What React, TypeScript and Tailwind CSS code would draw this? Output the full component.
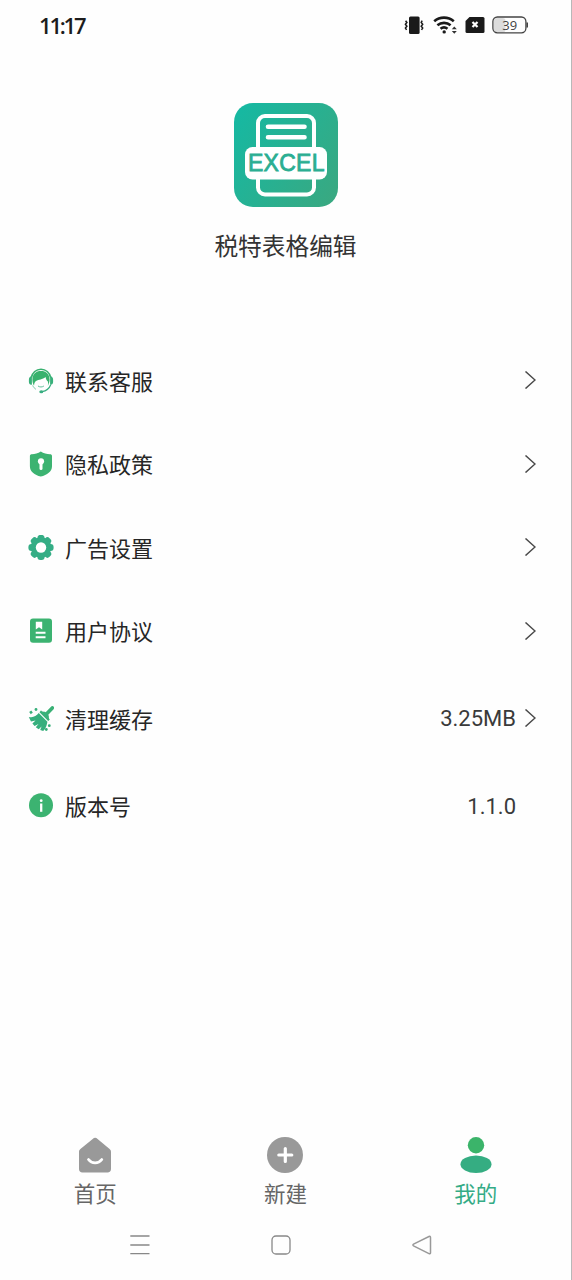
import type { ReactNode } from "react";

type MenuItemProps = {
  icon: ReactNode;
  label: string;
  value?: string;
  arrow?: boolean;
  className?: string;
};

type TabProps = {
  icon: ReactNode;
  label: string;
  active?: boolean;
};

function StatusBar() {
  return (
    <header className="flex h-[50px] items-center justify-between pl-[39px] pr-[43px]">
      <span className="font-['Open_Sans',sans-serif] text-[22px] font-semibold leading-none tracking-[-2.2px] text-[#1c1c1c]">11:17</span>
      <svg width="124" height="20" viewBox="0 0 124 20" fill="none" className="mt-px">
        <rect x="5" y="0.5" width="10.6" height="17.5" rx="1.5" fill="#1a1a1a" />
        <path d="M1.6 4.7l1.3 1.8-1.5 1.8 1.5 2-1.5 1.8 1.2 1.8M18.2 4.7l-1 1.8 1.5 1.8-1.5 2 1.5 1.8-1.2 1.8" stroke="#1a1a1a" strokeWidth="1.5" />
        <path d="M30.2 5.3a15 15 0 0 1 19.6 0M33.4 9.3a10.3 10.3 0 0 1 13.2 0M36.5 12.7a5.6 5.6 0 0 1 7 0" stroke="#1a1a1a" strokeWidth="2.6" />
        <circle cx="40.2" cy="15.9" r="1.7" fill="#1a1a1a" />
        <path d="M47.8 13.3l2.5-2.9 2.5 2.9zM47.8 14.9l2.5 2.9 2.5-2.9z" fill="#333" />
        <path d="M65.5 1H79a1.5 1.5 0 0 1 1.5 1.5v13A1.5 1.5 0 0 1 79 17H63a1.5 1.5 0 0 1-1.5-1.5V5z" fill="#1a1a1a" />
        <path d="M68.5 6l5 5M73.5 6l-5 5" stroke="#fff" strokeWidth="2.2" />
        <rect x="90" y="2" width="11.5" height="14.5" rx="3" fill="#dcdcdc" />
        <rect x="88.9" y="1" width="33" height="15.8" rx="4.5" stroke="#444" strokeWidth="1.3" />
        <path d="M123.2 6.5v5" stroke="#444" strokeWidth="1.6" />
        <text x="105.7" y="13.7" textAnchor="middle" fontSize="13" fill="#444" className="font-['Open_Sans',sans-serif]">39</text>
      </svg>
    </header>
  );
}

function AppLogo() {
  return (
    <svg width="104" height="104" viewBox="0 0 104 104" fill="none">
      <defs>
        <linearGradient id="logo" x1="0" y1="20" x2="104" y2="84" gradientUnits="userSpaceOnUse">
          <stop stopColor="#17b8a1" />
          <stop offset="1" stopColor="#38a982" />
        </linearGradient>
      </defs>
      <rect width="104" height="104" rx="19" fill="url(#logo)" />
      <rect x="24" y="13" width="56" height="78.5" rx="7" stroke="#fff" strokeWidth="4" />
      <path d="M34 23.7h36.5M34 34.3h36.5" stroke="#fff" strokeWidth="4.6" strokeLinecap="round" />
      <rect x="11" y="44" width="82" height="32.4" rx="7.5" fill="#fff" />
      <text x="14" y="68.4" textLength="76.5" fontSize="23" fill="#2bae92" stroke="#2bae92" strokeWidth="0.8" className="font-['Liberation_Sans',sans-serif]">EXCEL</text>
    </svg>
  );
}

function SupportIcon() {
  return (
    <svg width="26" height="26" viewBox="0 0 26 26" fill="none">
      <path d="M3.3 9.5C4.3 4.6 8.2 1.2 13 1.2s8.700 3.400 9.700 8.300" stroke="#38b06f" strokeWidth="1.6" />
      <path d="M3.900 8.200v8.600H3.200C1.800 16.600.9 15.600.9 14v-2.600c0-1.800 1.100-3 3-3.200zM22.100 8.200v8.600h.7c1.400-.2 2.300-1.200 2.300-2.800v-2.600c0-1.800-1.100-3-3-3.200z" fill="#38b07a" />
      <path d="M13 2.800c-5.100 0-8.600 3.500-8.600 8.700 0 2.200.5 4.400 1.600 6.200.2-3.200 1.500-5.100 4.200-5.700 3.300-.6 5.800-1.400 7.400-3 .3 2.200 1.100 3.600 2.300 4.600.4 1.300.3 2.700-.1 4.100 1.100-1.800 1.800-4 1.800-6.200 0-5.200-3.500-8.700-8.600-8.700z" fill="#38b26d" />
      <path d="M22.700 16.800c-1.300 3.600-4.600 6.200-8.700 6.900" stroke="#38ae80" strokeWidth="1.2" />
      <path d="M4.500 17.500c.9 1.700 2.100 3 3.500 3.900" stroke="#38ae80" strokeWidth="0.6" />
      <path d="M10.300 18.200c1.600 1.100 3.700 1.100 5.300 0" stroke="#38ae80" strokeWidth="0.8" strokeLinecap="round" />
      <ellipse cx="13.300" cy="23.700" rx="2" ry="1.500" fill="#38ae80" />
    </svg>
  );
}

function ShieldIcon() {
  return (
    <svg width="26" height="26" viewBox="0 0 26 26">
      <path d="M12.8.6c2.800 1.900 6 2.700 9.200 2.700 1.200 0 2 .5 2 1.700v10.200c0 5.400-4.900 8.600-11.200 10.400C6.500 23.800 1.900 20.600 1.900 15.200V5c0-1.200.8-1.700 2-1.700 3 0 6.100-.8 8.900-2.700z" fill="#3cb371" />
      <circle cx="13" cy="10.300" r="3.100" fill="#fff" />
      <path d="M13 11v6.500" stroke="#fff" strokeWidth="3" strokeLinecap="round" />
    </svg>
  );
}

function GearIcon() {
  return (
    <svg width="26" height="26" viewBox="0 0 26 26" fill="none">
      <circle cx="13" cy="12.500" r="10.300" fill="#34ad85" />
      {/* one tooth per 45deg */}
      <g stroke="#34ad85" strokeWidth="6" strokeLinejoin="round" strokeLinecap="round">
        <path d="M12.400 2.900h1.200M12.400 22.100h1.200M3.400 11.900v1.200M22.600 11.900v1.200M5.800 6.100l.8-.8M19.400 19.700l.8-.8M20.200 6.100l-.8-.8M6.600 19.700l-.8-.8" />
      </g>
      <circle cx="13" cy="12.500" r="5.200" fill="#fff" />
    </svg>
  );
}

function AgreementIcon() {
  return (
    <svg width="26" height="26" viewBox="0 0 26 26" fill="none">
      <rect x="2" y="0.5" width="22" height="24.2" rx="3" fill="#3cb371" />
      <path d="M7.8 3.8h6.400v7.800L11 9.300l-3.200 2.300z" fill="#fff" />
      <path d="M7.700 14.700h9.800M7.700 19.200h9.800" stroke="#fff" strokeWidth="2" />
    </svg>
  );
}

function BroomIcon() {
  return (
    <svg width="26" height="26" viewBox="0 0 26 26" fill="none">
      <path d="M24.300 1.900l-6.500 6.900" stroke="#39b075" strokeWidth="3.600" strokeLinecap="round" />
      <path d="M13.100 4.200c.7 2.100 3.100.9 4.300 1.800l3 2.900c1 1.300-.2 3.300 1.400 4.500l-1.600 1.700-8.700-8.900z" fill="#38b07a" />
      <path d="M10.700 7.100l8.700 8.700c-.6 3.600-1.400 6.400-4.200 9.300l-3-1.100 1.400-3.600-2.900 2.900-2.900-2.100 2.700-3.300-3.900 2.200-2.200-2.700 3.100-3-4.500 1.100L.8 10.900c4.100.9 7.300-.4 9.900-3.800z" fill="#36af7d" />
      <path d="M1.200 6.100l2-1.500 1.600 2-2 1.600z" fill="#38b07a" />
      <circle cx="8" cy="3.500" r="1.400" fill="#38b07a" />
      <circle cx="21.300" cy="19.700" r="1.400" fill="#38b07a" />
      <circle cx="18.300" cy="23.500" r="1.400" fill="#38b07a" />
    </svg>
  );
}

function InfoIcon() {
  return (
    <svg width="26" height="26" viewBox="0 0 26 26" fill="none">
      <circle cx="13" cy="12.300" r="12" fill="#3cb371" />
      <circle cx="13.200" cy="7.700" r="1.400" fill="#fff" />
      <path d="M13.200 10.500v8.300" stroke="#fff" strokeWidth="2.300" />
    </svg>
  );
}

function MenuItem({ icon, label, value, arrow = true, className = "h-[83.5px]" }: MenuItemProps) {
  return (
    <li className={`flex items-center pl-7 pr-[35px] text-[#262626] ${className}`}>
      {icon}
      <span className="-mt-0.5 ml-[11px] flex-1 text-[22px] leading-8">{label}</span>
      {value && <span className="mt-px font-['Roboto',sans-serif] text-[22px] leading-8 text-[#3a3a3a]">{value}</span>}
      <svg width="12" height="18" viewBox="0 0 12 18" fill="none" className="-mt-px ml-2">
        {arrow && <path d="M1.500.5L11 9l-9.500 8.500" stroke="#4a4a4a" strokeWidth="1.5" />}
      </svg>
    </li>
  );
}

function Tab({ icon, label, active }: TabProps) {
  return (
    <button type="button" className={`flex flex-1 flex-col items-center gap-1 ${active ? "text-[#34ab86]" : "text-[#666]"}`}>
      {icon}
      <span className="text-[21.5px] leading-8">{label}</span>
    </button>
  );
}

function TabBar() {
  return (
    <nav className="flex h-[84px] pt-1">
      <Tab
        label="首页"
        icon={
          <svg width="36" height="36" viewBox="0 0 36 36" fill="none">
            <path d="M15.700 1.900a3.600 3.600 0 0 1 4.900 0L32.600 12c1 .9 1.400 1.700 1.400 3v17c0 2.200-1.300 3.500-3.500 3.500h-25C3.300 35.500 2 34.200 2 32V15c0-1.300.4-2.100 1.400-3z" fill="#999" />
            <path d="M11.500 22.500c3.400 4.500 9.800 4.500 13.300 0" stroke="#fff" strokeWidth="2.800" strokeLinecap="round" />
          </svg>
        }
      />
      <Tab
        label="新建"
        icon={
          <svg width="36" height="36" viewBox="0 0 36 36" fill="none">
            <circle cx="18" cy="18" r="18" fill="#999" />
            <path d="M18.300 11.500v13M11.800 18h13" stroke="#fff" strokeWidth="3.200" strokeLinecap="round" />
          </svg>
        }
      />
      <Tab
        label="我的"
        active
        icon={
          <svg width="36" height="36" viewBox="0 0 36 36" fill="none">
            <circle cx="18" cy="8.200" r="8.200" fill="#3bb46a" />
            <ellipse cx="18" cy="27.200" rx="15.500" ry="8.800" fill="#35ad82" />
          </svg>
        }
      />
    </nav>
  );
}

function SystemNav() {
  return (
    <div className="flex h-[63px] items-center gap-[119px] pl-[129px] pb-[7px]">
      <svg width="22" height="22" viewBox="0 0 22 22" fill="none" stroke="#888" strokeWidth="1.3">
        <path d="M1.300 2h19.200M1.300 11h19.200M1.300 19.700h19.200" />
      </svg>
      <svg width="22" height="22" viewBox="0 0 22 22" fill="none" stroke="#888" strokeWidth="1.3">
        <rect x="2" y="2" width="18" height="18" rx="4" />
      </svg>
      <svg width="22" height="22" viewBox="0 0 22 22" fill="none" stroke="#999" strokeWidth="1.5" strokeLinejoin="round">
        <path d="M18 2.500L2.500 10.200c-.8.500-.8 1.200 0 1.600L18 19.600c.9.400 1.500 0 1.500-.9V3.400c0-.9-.6-1.300-1.500-.9z" />
      </svg>
    </div>
  );
}

export default function App() {
  return (
    <div className="flex h-[1280px] w-[572px] flex-col border-r border-[#b8b8b8] bg-[#fefefe] font-['Noto_Sans_CJK_SC',sans-serif]">
      <StatusBar />
      <section className="flex h-[289px] flex-col items-center pt-[53px]">
        <AppLogo />
        <h1 className="mt-5 text-[23.7px] leading-9 text-[#333]">税特表格编辑</h1>
      </section>
      <ul className="flex-1">
        <MenuItem icon={<SupportIcon />} label="联系客服" />
        <MenuItem icon={<ShieldIcon />} label="隐私政策" />
        <MenuItem icon={<GearIcon />} label="广告设置" />
        <MenuItem icon={<AgreementIcon />} label="用户协议" />
        <MenuItem icon={<BroomIcon />} label="清理缓存" value="3.25MB" className="h-[91px]" />
        <MenuItem icon={<InfoIcon />} label="版本号" value="1.1.0" arrow={false} className="h-[84px]" />
      </ul>
      <TabBar />
      <SystemNav />
    </div>
  );
}
